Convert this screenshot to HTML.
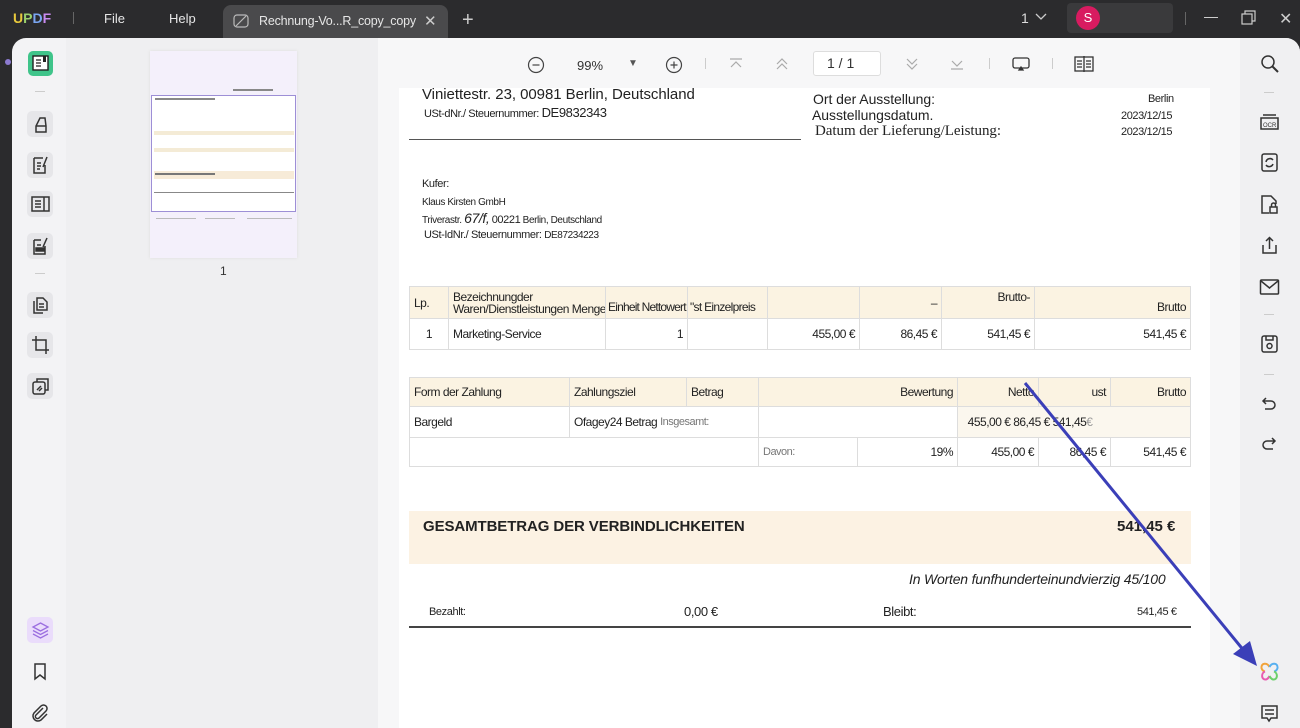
<!DOCTYPE html>
<html><head><meta charset="utf-8">
<style>
*{margin:0;padding:0;box-sizing:border-box}
body{width:1300px;height:728px;overflow:hidden;background:#2b2b2d;font-family:"Liberation Sans",sans-serif;position:relative}
.a{position:absolute}
.t{position:absolute;white-space:nowrap;color:#222}
.d{letter-spacing:-0.4px}
.d2{letter-spacing:-0.05px}
.ico{position:absolute;stroke:#333;fill:none;stroke-width:1.5}
.sq{position:absolute;width:26px;height:26px;border-radius:5px;background:#e6e6e9;left:27px}
.cell{position:absolute;border:1px solid #ddd;font-size:12px;color:#222;padding:0 4px;display:flex;align-items:center;white-space:nowrap;letter-spacing:-0.5px}
.beige{background:#fbf3e2}
</style></head><body>
<!-- top bar -->
<div class="t" style="left:13px;top:10px;font-weight:bold;font-size:14px;color:#e8c93c">U<span style="color:#9ad06c">P</span><span style="color:#7aa6f2">D</span><span style="color:#c88af0">F</span></div>
<div class="a" style="left:73px;top:12px;width:1px;height:12px;background:#666"></div>
<div class="t" style="left:104px;top:11px;font-size:13px;color:#e6e6e6">File</div>
<div class="t" style="left:169px;top:11px;font-size:13px;color:#e6e6e6">Help</div>
<div class="a" style="left:223px;top:5px;width:225px;height:33px;background:#4a4a4c;border-radius:8px 8px 0 0"></div>
<svg class="a" style="left:233px;top:14px" width="16" height="14"><rect x="1" y="1" width="14" height="12" rx="3" fill="none" stroke="#bbb" stroke-width="1.2"/><path d="M3 12 L13 2" stroke="#bbb" stroke-width="1.2"/></svg>
<div class="t" style="left:259px;top:14px;font-size:12.5px;color:#e6e6e6;letter-spacing:-0.2px">Rechnung-Vo...R_copy_copy</div>
<div class="t" style="left:424px;top:12px;font-size:15px;color:#ccc">✕</div>
<div class="t" style="left:462px;top:9px;font-size:20px;color:#ccc">+</div>
<div class="t" style="left:1021px;top:10px;font-size:14px;color:#ddd">1</div>
<svg class="a" style="left:1035px;top:13px" width="12" height="8"><path d="M1 1 L6 6 L11 1" stroke="#ccc" fill="none" stroke-width="1.3"/></svg>
<div class="a" style="left:1067px;top:3px;width:106px;height:30px;background:#3a3a3c;border-radius:4px"></div>
<div class="a" style="left:1076px;top:6px;width:24px;height:24px;border-radius:50%;background:#d81b60;color:#fff;font-size:13px;text-align:center;line-height:24px">S</div>
<div class="a" style="left:1185px;top:12px;width:1px;height:13px;background:#666"></div>
<div class="a" style="left:1204px;top:17px;width:14px;height:1px;background:#ccc"></div>
<svg class="a" style="left:1241px;top:10px" width="16" height="16"><rect x="1" y="4" width="10" height="10" fill="none" stroke="#ccc" stroke-width="1.2"/><path d="M4 4 V1 H14 V11 H11" fill="none" stroke="#ccc" stroke-width="1.2"/></svg>
<div class="t" style="left:1279px;top:9px;font-size:16px;color:#ccc">✕</div>

<!-- main body -->
<div class="a" style="left:12px;top:38px;width:1288px;height:690px;background:#f3f3f5;border-radius:14px 14px 0 0"></div>
<div class="a" style="left:5px;top:59px;width:6px;height:6px;border-radius:50%;background:#8c7ad0"></div>
<!-- left rail icons -->
<div class="a" style="left:28px;top:51px;width:25px;height:25px;border-radius:5px;background:#3fc48a"></div>
<svg class="a" style="left:31px;top:54px" width="19" height="19"><rect x="2" y="2" width="15" height="14" fill="#fff" stroke="#222" stroke-width="1.4"/><path d="M5 6h5M5 9h5M5 12h5" stroke="#222" stroke-width="1.3"/><rect x="12" y="2" width="3" height="6" fill="#222"/></svg>
<div class="a" style="left:35px;top:91px;width:10px;height:1px;background:#ccc"></div>
<div class="sq" style="top:111px"></div><svg class="ico" style="left:31px;top:114px" width="19" height="20"><path d="M5 18 L5 12 L9 4 L14 4 L15 12 L15 18 Z M5 12 H15" /></svg>
<div class="sq" style="top:152px"></div><svg class="ico" style="left:31px;top:155px" width="19" height="20"><path d="M3 3 H12 M3 3 V18 H14 V10 M6 8h4M6 11h4M6 14h3 M16 2 L12 12"/></svg>
<div class="sq" style="top:191px"></div><svg class="ico" style="left:30px;top:194px" width="21" height="20"><rect x="2" y="3" width="17" height="14"/><path d="M5 7h6M5 10h6M5 13h6M14 3v14"/></svg>
<div class="sq" style="top:233px"></div><svg class="ico" style="left:31px;top:236px" width="19" height="20"><path d="M3 4 V18 H14 V10 M3 4 H10 M6 9h4 M16 2 L12 11"/><rect x="5" y="12" width="8" height="3" fill="#333"/></svg>
<div class="a" style="left:35px;top:273px;width:10px;height:1px;background:#ccc"></div>
<div class="sq" style="top:292px"></div><svg class="ico" style="left:31px;top:295px" width="19" height="20"><path d="M6 3 H12 L16 7 V15 H6 Z M3 6 V18 H12 M8 9h5M8 12h5"/></svg>
<div class="sq" style="top:332px"></div><svg class="ico" style="left:31px;top:335px" width="19" height="20"><path d="M5 1 V15 H18 M1 5 H15 V19"/></svg>
<div class="sq" style="top:373px"></div><svg class="ico" style="left:31px;top:376px" width="19" height="20"><rect x="2" y="6" width="12" height="12" rx="2"/><path d="M6 6 V3 H17 V14 H14 M6 14 L10 10 M8 15 L11 12"/></svg>
<div class="a" style="left:27px;top:617px;width:26px;height:26px;border-radius:5px;background:#eadcfb"></div>
<svg class="a" style="left:31px;top:621px" width="19" height="19" fill="none" stroke="#9b6ee0" stroke-width="1.3"><path d="M9.5 2 L17 6 L9.5 10 L2 6 Z M2 9.5 L9.5 13.5 L17 9.5 M2 13 L9.5 17 L17 13"/></svg>
<svg class="ico" style="left:33px;top:663px" width="14" height="18"><path d="M2 1 H12 V16 L7 12 L2 16 Z"/></svg>
<svg class="ico" style="left:31px;top:704px" width="18" height="18"><path d="M12 4 L5 11 A2 2 0 0 0 8 14 L15 7 A3.5 3.5 0 0 0 10 2 L3 9 A5 5 0 0 0 10 16 L16 10"/></svg>

<!-- thumbnail panel -->
<div class="a" style="left:66px;top:38px;width:312px;height:690px;background:#efeff1"></div>
<div class="a" style="left:150px;top:51px;width:147px;height:207px;background:#f4f0fb;box-shadow:0 0 3px #ddd"></div>
<div class="a" style="left:151px;top:95px;width:145px;height:117px;border:1px solid #9d8fd6;background:#fff"></div>
<div class="a" style="left:233px;top:89px;width:40px;height:2px;background:#888"></div>
<div class="a" style="left:155px;top:98px;width:60px;height:2px;background:#888"></div>
<div class="a" style="left:154px;top:131px;width:140px;height:4px;background:#f4ebd6"></div>
<div class="a" style="left:154px;top:148px;width:140px;height:4px;background:#f4ebd6"></div>
<div class="a" style="left:154px;top:171px;width:140px;height:8px;background:#f7ebd8"></div>
<div class="a" style="left:155px;top:173px;width:60px;height:2px;background:#777"></div>
<div class="a" style="left:154px;top:192px;width:140px;height:1px;background:#888"></div>
<div class="a" style="left:156px;top:218px;width:40px;height:1px;background:#bbb"></div>
<div class="a" style="left:205px;top:218px;width:30px;height:1px;background:#bbb"></div>
<div class="a" style="left:247px;top:218px;width:45px;height:1px;background:#bbb"></div>
<div class="t" style="left:220px;top:264px;font-size:12px;color:#333">1</div>

<!-- doc area -->
<div class="a" style="left:378px;top:38px;width:862px;height:690px;background:#f7f7f8"></div>
<div class="a" style="left:399px;top:88px;width:811px;height:640px;background:#fff"></div>
<!-- toolbar -->
<svg class="a" style="left:527px;top:56px" width="18" height="18" fill="none" stroke="#444" stroke-width="1.2"><circle cx="9" cy="9" r="7.5"/><path d="M5.5 9h7"/></svg>
<div class="t" style="left:577px;top:58px;font-size:13px;color:#333">99%</div>
<div class="t" style="left:628px;top:58px;font-size:10px;color:#555">▼</div>
<svg class="a" style="left:665px;top:56px" width="18" height="18" fill="none" stroke="#444" stroke-width="1.2"><circle cx="9" cy="9" r="7.5"/><path d="M5.5 9h7M9 5.5v7"/></svg>
<div class="a" style="left:705px;top:58px;width:1px;height:11px;background:#ccc"></div>
<svg class="a" style="left:729px;top:57px" width="14" height="14" fill="none" stroke="#aaa" stroke-width="1.2"><path d="M1 2h12M2 10 L7 5 L12 10"/></svg>
<svg class="a" style="left:775px;top:57px" width="14" height="14" fill="none" stroke="#aaa" stroke-width="1.2"><path d="M2 7 L7 2 L12 7M2 12 L7 7 L12 12"/></svg>
<div class="a" style="left:813px;top:51px;width:68px;height:25px;border:1px solid #ddd;border-radius:3px;background:#fff"></div>
<div class="t" style="left:827px;top:55px;font-size:14px;color:#333">1 / 1</div>
<svg class="a" style="left:905px;top:57px" width="14" height="14" fill="none" stroke="#aaa" stroke-width="1.2"><path d="M2 2 L7 7 L12 2M2 7 L7 12 L12 7"/></svg>
<svg class="a" style="left:950px;top:57px" width="14" height="14" fill="none" stroke="#aaa" stroke-width="1.2"><path d="M2 4 L7 9 L12 4M1 12h12"/></svg>
<div class="a" style="left:989px;top:58px;width:1px;height:11px;background:#ccc"></div>
<svg class="a" style="left:1012px;top:56px" width="18" height="16" fill="none" stroke="#333" stroke-width="1.3"><rect x="1" y="2" width="16" height="10" rx="2"/><path d="M7 14 L9 11 L11 14Z" fill="#333"/></svg>
<div class="a" style="left:1052px;top:58px;width:1px;height:11px;background:#ccc"></div>
<svg class="a" style="left:1074px;top:55px" width="20" height="18" fill="none" stroke="#333" stroke-width="1.3"><rect x="1" y="2" width="18" height="14"/><path d="M10 1v16M3 6h5M3 9h5M3 12h5M12 6h5M12 9h5M12 12h5"/></svg>

<!-- document text -->
<div class="t d2" style="left:422px;top:86px;font-size:15px">Viniettestr. 23, 00981 Berlin, Deutschland</div>
<div class="t d" style="left:424px;top:105px;font-size:11px">USt-dNr./ Steuernummer: <span style="font-size:13px">DE9832343</span></div>
<div class="a" style="left:409px;top:139px;width:392px;height:1px;background:#555"></div>
<div class="t d2" style="left:813px;top:91px;font-size:14px">Ort der Ausstellung:</div>
<div class="t d2" style="left:812px;top:107px;font-size:14px">Ausstellungsdatum.</div>
<div class="t d2" style="left:815px;top:123px;font-size:15px;font-family:'Liberation Serif',serif">Datum der Lieferung/Leistung:</div>
<div class="t d" style="left:1148px;top:93px;font-size:11px">Berlin</div>
<div class="t d" style="left:1121px;top:110px;font-size:11px">2023/12/15</div>
<div class="t d" style="left:1121px;top:126px;font-size:11px">2023/12/15</div>
<div class="t d" style="left:422px;top:178px;font-size:11px">Kufer:</div>
<div class="t d" style="left:422px;top:197px;font-size:10px">Klaus Kirsten GmbH</div>
<div class="t d" style="left:422px;top:210px;font-size:10px">Triverastr. <i style="font-size:14px">67/f,</i> <span style="font-size:11px">00221</span> Berlin, Deutschland</div>
<div class="t d" style="left:424px;top:229px;font-size:11px">USt-IdNr./ Steuernummer: <span style="font-size:10px">DE87234223</span></div>

<!-- table 1 -->
<div class="cell beige" style="left:409px;top:286px;width:40px;height:33px">Lp.</div>
<div class="cell beige" style="left:448px;top:286px;width:158px;height:33px;line-height:12px;align-items:flex-start;padding-top:4px;overflow:visible">Bezeichnungder<br>Waren/Dienstleistungen Menge</div>
<div class="cell beige" style="left:605px;top:286px;width:83px;height:33px;align-items:flex-end;padding:0 0 4px 2px;letter-spacing:-0.8px">Einheit Nettowert</div>
<div class="cell beige" style="left:687px;top:286px;width:81px;height:33px;align-items:flex-end;padding:0 0 4px 2px;letter-spacing:-0.7px">"st Einzelpreis</div>
<div class="cell beige" style="left:767px;top:286px;width:93px;height:33px"></div>
<div class="cell beige" style="left:859px;top:286px;width:83px;height:33px;justify-content:flex-end">–</div>
<div class="cell beige" style="left:941px;top:286px;width:94px;height:33px;justify-content:flex-end;align-items:flex-start;padding-top:3px">Brutto-</div>
<div class="cell beige" style="left:1034px;top:286px;width:157px;height:33px;justify-content:flex-end;align-items:flex-end;padding-bottom:4px">Brutto</div>
<div class="cell" style="left:409px;top:318px;width:40px;height:32px;justify-content:center">1</div>
<div class="cell" style="left:448px;top:318px;width:158px;height:32px">Marketing-Service</div>
<div class="cell" style="left:605px;top:318px;width:83px;height:32px;justify-content:flex-end">1</div>
<div class="cell" style="left:687px;top:318px;width:81px;height:32px"></div>
<div class="cell" style="left:767px;top:318px;width:93px;height:32px;justify-content:flex-end">455,00 €</div>
<div class="cell" style="left:859px;top:318px;width:83px;height:32px;justify-content:flex-end">86,45 €</div>
<div class="cell" style="left:941px;top:318px;width:94px;height:32px;justify-content:flex-end">541,45 €</div>
<div class="cell" style="left:1034px;top:318px;width:157px;height:32px;justify-content:flex-end">541,45 €</div>

<!-- table 2 -->
<div class="cell beige" style="left:409px;top:377px;width:161px;height:30px">Form der Zahlung</div>
<div class="cell beige" style="left:569px;top:377px;width:118px;height:30px">Zahlungsziel</div>
<div class="cell beige" style="left:686px;top:377px;width:73px;height:30px">Betrag</div>
<div class="cell beige" style="left:758px;top:377px;width:200px;height:30px;justify-content:flex-end">Bewertung</div>
<div class="cell beige" style="left:957px;top:377px;width:82px;height:30px;justify-content:flex-end">Netto</div>
<div class="cell beige" style="left:1038px;top:377px;width:73px;height:30px;justify-content:flex-end">ust</div>
<div class="cell beige" style="left:1110px;top:377px;width:81px;height:30px;justify-content:flex-end">Brutto</div>
<div class="cell" style="left:409px;top:406px;width:161px;height:32px;align-items:flex-start;padding-top:8px">Bargeld</div>
<div class="cell" style="left:569px;top:406px;width:190px;height:32px">Ofagey24 Betrag&nbsp;<span style="color:#777;font-size:11px">Insgesamt:</span></div>
<div class="cell" style="left:758px;top:406px;width:200px;height:32px"></div>
<div class="cell" style="left:957px;top:406px;width:234px;height:32px;background:#fbf7ee">&nbsp;&nbsp;455,00 € 86,45 € 541,45 <span style="color:#999">€</span></div>
<div class="cell" style="left:409px;top:437px;width:350px;height:30px"></div>
<div class="cell" style="left:758px;top:437px;width:100px;height:30px;color:#777;font-size:11px">Davon:</div>
<div class="cell" style="left:857px;top:437px;width:101px;height:30px;justify-content:flex-end">19%</div>
<div class="cell" style="left:957px;top:437px;width:82px;height:30px;justify-content:flex-end">455,00 €</div>
<div class="cell" style="left:1038px;top:437px;width:73px;height:30px;justify-content:flex-end">86,45 €</div>
<div class="cell" style="left:1110px;top:437px;width:81px;height:30px;justify-content:flex-end">541,45 €</div>

<!-- total -->
<div class="a" style="left:409px;top:511px;width:782px;height:53px;background:#fcf2e3"></div>
<div class="t" style="left:423px;top:518px;font-size:15px;font-weight:bold;letter-spacing:-0.1px">GESAMTBETRAG DER VERBINDLICHKEITEN</div>
<div class="t" style="left:1117px;top:518px;font-size:15px;font-weight:bold">541,45 €</div>
<div class="t" style="left:909px;top:571px;font-size:14px;font-style:italic;letter-spacing:-0.2px">In Worten funfhunderteinundvierzig 45/100</div>
<div class="t d" style="left:429px;top:606px;font-size:11px">Bezahlt:</div>
<div class="t d" style="left:684px;top:604px;font-size:13px">0,00 €</div>
<div class="t d" style="left:883px;top:604px;font-size:13px">Bleibt:</div>
<div class="t d" style="left:1137px;top:606px;font-size:11px">541,45 €</div>
<div class="a" style="left:409px;top:626px;width:782px;height:2px;background:#444"></div>

<!-- right rail -->
<div class="a" style="left:1240px;top:38px;width:60px;height:690px;background:#f0f0f2;border-radius:0 14px 0 0"></div>
<svg class="ico" style="left:1260px;top:54px" width="20" height="20"><circle cx="8" cy="8" r="6"/><path d="M12.5 12.5 L18 18" stroke-width="2"/></svg>
<div class="a" style="left:1264px;top:92px;width:10px;height:1px;background:#ccc"></div>
<svg class="ico" style="left:1259px;top:111px" width="21" height="20" stroke-width="1.2"><path d="M4 4 H17 M2 7 H19 V18 H2 Z"/><text x="4" y="16" font-size="6" font-family="Liberation Sans" fill="#333" stroke="none">OCR</text></svg>
<svg class="ico" style="left:1260px;top:152px" width="19" height="21"><rect x="2" y="2" width="15" height="17" rx="2"/><path d="M6 10 A4 4 0 0 1 13 8 M13 12 A4 4 0 0 1 6 13"/></svg>
<svg class="ico" style="left:1260px;top:194px" width="19" height="21"><path d="M9 19 H2 V2 H11 L16 7 V10"/><rect x="10" y="13" width="7" height="6"/><path d="M11.5 13 V11 A2 2 0 0 1 15.5 11 V13"/></svg>
<svg class="ico" style="left:1260px;top:235px" width="19" height="21"><path d="M3 10 V18 H16 V10 M9.5 14 V3 M6 6 L9.5 2.5 L13 6"/></svg>
<svg class="ico" style="left:1259px;top:278px" width="21" height="18"><rect x="1.5" y="2" width="18" height="14" rx="1"/><path d="M2 3 L10.5 10 L19 3"/></svg>
<div class="a" style="left:1264px;top:314px;width:10px;height:1px;background:#ccc"></div>
<svg class="ico" style="left:1260px;top:334px" width="19" height="20"><rect x="2" y="2" width="15" height="16" rx="2"/><path d="M6 2 V6 H13 V2"/><circle cx="9.5" cy="12" r="2.5"/></svg>
<div class="a" style="left:1264px;top:374px;width:10px;height:1px;background:#ccc"></div>
<svg class="ico" style="left:1261px;top:396px" width="16" height="14" stroke="#bbb"><path d="M5 2 L2 5 L5 8 M2 5 H10 A4 4 0 0 1 10 13 H4"/></svg>
<svg class="ico" style="left:1261px;top:436px" width="16" height="14" stroke="#bbb"><path d="M11 2 L14 5 L11 8 M14 5 H6 A4 4 0 0 0 6 13 H12"/></svg>
<svg class="a" style="left:1259px;top:661px" width="21" height="21" fill="none" stroke-width="2"><path d="M10.5 6 C8 1 2 2 2.5 7 C3 10 6 10.5 6 10.5" stroke="#f2a33a"/><path d="M10.5 6 C13 1 19 2 18.5 7 C18 10 15 10.5 15 10.5" stroke="#58b0f0"/><path d="M6 10.5 C2 12 2 19 7 18.5 C9 18 10.5 15 10.5 15" stroke="#e85ab0"/><path d="M15 10.5 C19 12 19 19 14 18.5 C12 18 10.5 15 10.5 15" stroke="#6bd06a"/></svg>
<svg class="ico" style="left:1260px;top:704px" width="19" height="19"><path d="M2 2 H17 V14 H11 L9 17 L7 14 H2 Z M5 6h9M5 10h9"/></svg>

<!-- arrow -->
<svg class="a" style="left:0;top:0" width="1300" height="728"><line x1="1025" y1="383" x2="1245" y2="652" stroke="#3b3fb8" stroke-width="3"/><path d="M1257 666 L1233 654 L1250 641 Z" fill="#3b3fb8"/></svg>
</body></html>
